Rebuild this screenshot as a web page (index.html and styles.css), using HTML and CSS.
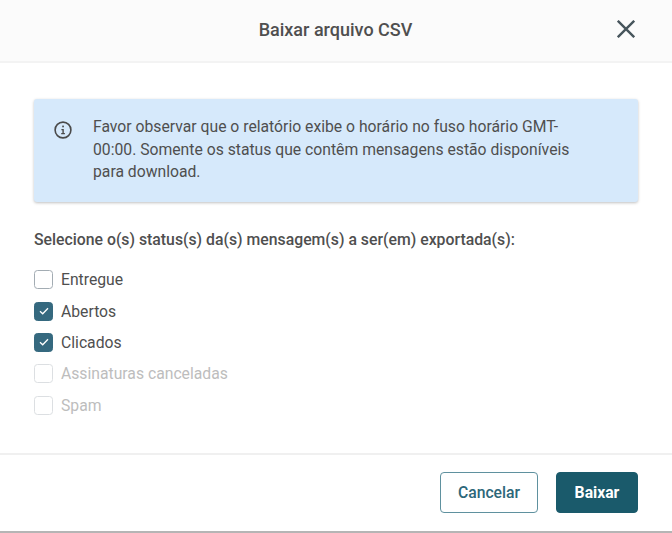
FILE: index.html
```html
<!DOCTYPE html>
<html lang="pt-BR">
<head>
    <meta charset="UTF-8">
    <meta name="viewport" content="width=device-width, initial-scale=1.0">
    <title>Baixar arquivo CSV</title>
    <link rel="stylesheet" href="styles.css">
</head>
<body>
    <div class="modal">
        <div class="modal-header">
            <h2>Baixar arquivo CSV</h2>
            <button class="close-btn" aria-label="Fechar">
                <svg width="18" height="18" viewBox="0 0 18 18"><path d="M0.8 0.8L17.2 17.2M17.2 0.8L0.8 17.2" stroke="#47555c" stroke-width="2.4" fill="none"/></svg>
            </button>
        </div>
        <div class="modal-body">
            <div class="notice">
                <svg class="notice-icon" width="18" height="18" viewBox="0 0 18 18">
                    <circle cx="9" cy="9" r="7.9" stroke="#4a4a4a" stroke-width="1.6" fill="none"/>
                    <rect x="8.2" y="4.6" width="1.7" height="1.7" fill="#4a4a4a"/>
                    <path d="M7.4 8h2.4v4h1.1v1.2H7.2V12h1.2V9.2h-1z" fill="#4a4a4a"/>
                </svg>
                <p>Favor observar que o relatório exibe o horário no fuso horário GMT-00:00. Somente os status que contêm mensagens estão disponíveis para download.</p>
            </div>
            <p class="select-title">Selecione o(s) status(s) da(s) mensagem(s) a ser(em) exportada(s):</p>
            <ul class="status-list">
                <li><span class="box"></span>Entregue</li>
                <li><span class="box checked"><svg width="10" height="8" viewBox="0 0 10 8"><path d="M1 4.2L3.7 6.8L9 1.2" stroke="#fff" stroke-width="1.3" fill="none"/></svg></span>Abertos</li>
                <li><span class="box checked"><svg width="10" height="8" viewBox="0 0 10 8"><path d="M1 4.2L3.7 6.8L9 1.2" stroke="#fff" stroke-width="1.3" fill="none"/></svg></span>Clicados</li>
                <li class="disabled"><span class="box"></span>Assinaturas canceladas</li>
                <li class="disabled"><span class="box"></span>Spam</li>
            </ul>
        </div>
        <div class="modal-footer">
            <button class="btn btn-outline">Cancelar</button>
            <button class="btn btn-primary">Baixar</button>
        </div>
    </div>
</body>
</html>
```
FILE: styles.css
```css
html, body {
    margin: 0;
    padding: 0;
}

body {
    font-family: Roboto, "Liberation Sans", sans-serif;
    background-color: #fff;
    color: #4f4f4f;
    font-size: 15.72px;
}

.modal {
    width: 672px;
    height: 533px;
    box-sizing: border-box;
    display: flex;
    flex-direction: column;
    border-bottom: 2px solid #b5b5b5;
    overflow: hidden;
}

.modal-header {
    height: 63px;
    box-sizing: border-box;
    padding: 0 1px 3px 0;
    background-color: #fbfbfb;
    border-bottom: 2px solid #f3f3f3;
    display: flex;
    align-items: center;
    justify-content: center;
    position: relative;
}

.modal-header h2 {
    margin: 0;
    font-size: 18px;
    font-weight: 500;
    color: #4f4f4f;
}

.close-btn {
    position: absolute;
    top: 20px;
    right: 37px;
    padding: 0;
    border: 0;
    background: none;
    display: flex;
}

.modal-body {
    flex: 1;
    padding: 36px 34px 0;
}

.notice {
    width: 604px;
    height: 103px;
    box-sizing: border-box;
    padding: 17px 58px 0 20px;
    display: flex;
    gap: 21px;
    background-color: #d6e9fb;
    border-radius: 3px;
    box-shadow: 0 1px 3px rgba(0, 0, 0, 0.25);
}

.notice-icon {
    flex: none;
    margin-top: 5px;
}

.notice p {
    margin: 0;
    line-height: 22.5px;
}

.select-title {
    margin: 28px 0 0;
    line-height: 19px;
    font-size: 15.8px;
    font-weight: 500;
}

.status-list {
    list-style: none;
    margin: 15px 0 0;
    padding: 0;
}

.status-list li {
    height: 31.4px;
    display: flex;
    align-items: center;
    gap: 8px;
}

.box {
    width: 19px;
    height: 19px;
    box-sizing: border-box;
    border: 1.5px solid #a3acb3;
    border-radius: 3.5px;
    background-color: #fff;
    display: flex;
    align-items: center;
    justify-content: center;
}

.box.checked {
    background-color: #35697f;
    border-color: #35697f;
}

.disabled {
    color: #bdbdbd;
}

.disabled .box {
    border-color: #dcdfe2;
}

.modal-footer {
    height: 78px;
    box-sizing: border-box;
    border-top: 2px solid #f0f0f0;
    padding: 17px 34px 0 0;
    display: flex;
    justify-content: flex-end;
    gap: 18px;
}

.btn {
    height: 41px;
    border-radius: 4px;
    font-family: inherit;
    font-size: 15.72px;
    font-weight: 500;
    padding: 0;
}

.btn-outline {
    width: 98px;
    background-color: #fff;
    border: 1px solid #5f919f;
    color: #2d6779;
}

.btn-primary {
    width: 82px;
    background-color: #1a5a6b;
    border: 1px solid #1a5a6b;
    color: #fff;
    font-weight: 700;
}
```
